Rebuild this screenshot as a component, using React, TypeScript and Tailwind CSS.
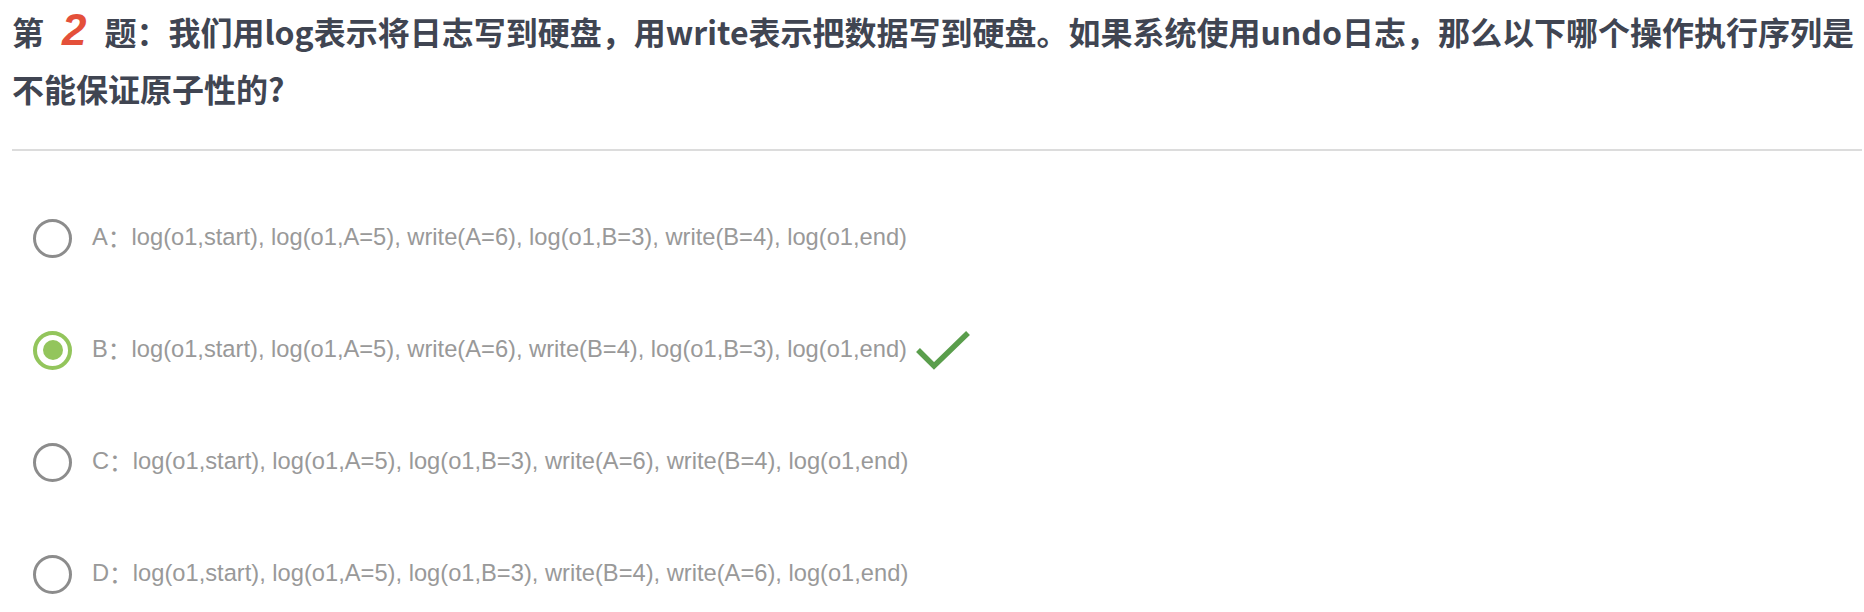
import React from "react";

const options = [
  { key: "A", text: "log(o1,start), log(o1,A=5), write(A=6), log(o1,B=3), write(B=4), log(o1,end)" },
  { key: "B", text: "log(o1,start), log(o1,A=5), write(A=6), write(B=4), log(o1,B=3), log(o1,end)" },
  { key: "C", text: "log(o1,start), log(o1,A=5), log(o1,B=3), write(A=6), write(B=4), log(o1,end)" },
  { key: "D", text: "log(o1,start), log(o1,A=5), log(o1,B=3), write(B=4), write(A=6), log(o1,end)" },
];

const selected = "B";
const correct = "B";

function Radio({ checked }: { checked: boolean }) {
  if (checked) {
    return (
      <span className="w-[39px] h-[39px] rounded-full border-[4px] border-[#93c55c] flex items-center justify-center shrink-0">
        <span className="w-[20px] h-[20px] rounded-full bg-[#93c55c]" />
      </span>
    );
  }
  return <span className="w-[39px] h-[39px] rounded-full border-[3.5px] border-[#8c8c8c] shrink-0" />;
}

function CheckMark() {
  return (
    <svg width="56" height="44" viewBox="0 0 56 44" className="ml-[8px]">
      <path d="M3 22 L19 38 L53 5" fill="none" stroke="#5a9e4c" strokeWidth="5.5" strokeLinecap="butt" strokeLinejoin="miter" />
    </svg>
  );
}

export default function App() {
  return (
    <div className="w-[1864px] h-[612px] bg-white overflow-hidden pl-[12px] pr-[2px] pt-[3px]">
      <h1
        className="text-[32px] leading-[57px] font-bold text-[#404552]"
        style={{ fontFamily: '"Noto Sans CJK SC", sans-serif' }}
      >
        <span className="whitespace-nowrap">
          第
          <span
            className="inline-block mx-[18px] text-[44px] leading-none italic text-[#e4503a] font-bold"
            style={{ fontFamily: '"Liberation Sans", Arial, sans-serif' }}
          >
            2
          </span>
          题：我们用log表示将日志写到硬盘，用write表示把数据写到硬盘。如果系统使用undo日志，那么以下哪个操作执行序列是
        </span>
        <br />
        不能保证原子性的?
      </h1>

      <div className="mt-[32px] h-[2px] bg-[#dcdcdc]" />

      <div className="mt-[31px] flex flex-col">
        {options.map((o) => (
          <label key={o.key} className="h-[112px] flex items-center pl-[21px] gap-[20px]">
            <Radio checked={o.key === selected} />
            <span
              className="flex items-center text-[23.7px] text-[#999999]"
              style={{ fontFamily: '"Liberation Sans", "Noto Sans CJK SC", Arial, sans-serif' }}
            >
              {o.key}
              <span style={{ fontFamily: '"Noto Sans CJK SC", sans-serif' }}>：</span>
              {o.text}
              {o.key === correct && <CheckMark />}
            </span>
          </label>
        ))}
      </div>
    </div>
  );
}
